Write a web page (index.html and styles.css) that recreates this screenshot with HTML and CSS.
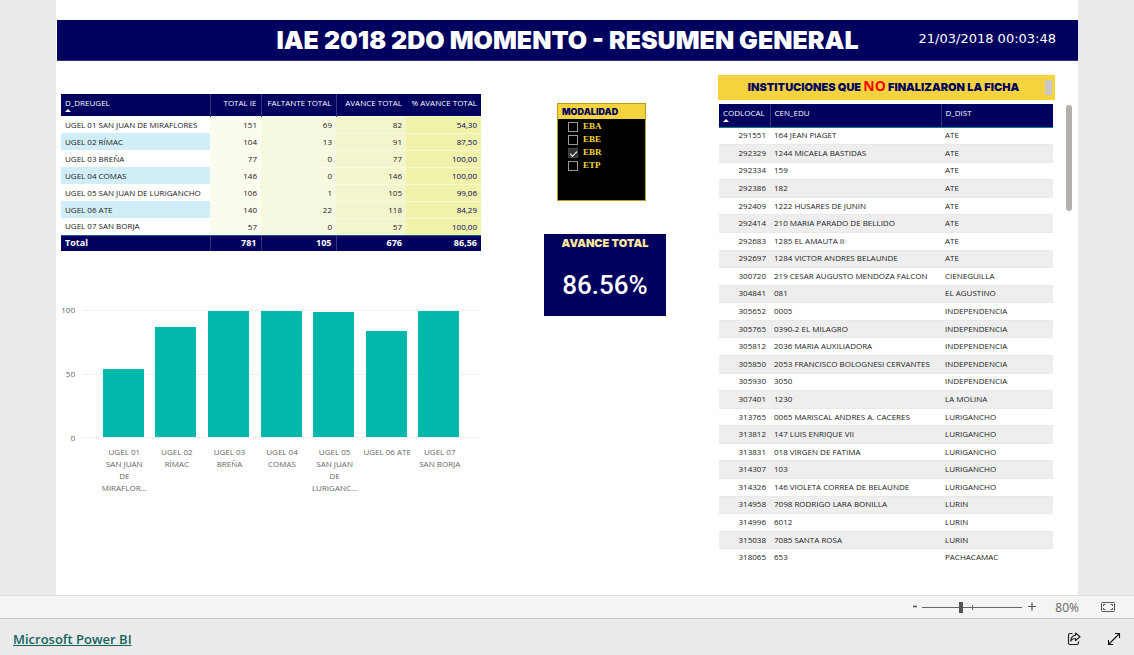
FILE: index.html
```html
<!DOCTYPE html>
<html lang="es">
<head>
<meta charset="utf-8">
<title>IAE 2018 2DO MOMENTO - RESUMEN GENERAL</title>
<link rel="stylesheet" href="styles.css">
</head>
<body>
<main class="stage">
  <div class="report">
    <header class="banner">
      <h1 class="banner-title">IAE 2018 2DO MOMENTO - RESUMEN GENERAL</h1>
      <time class="banner-time">21/03/2018 00:03:48</time>
    </header>
    <div class="columns">
      <section class="summary">
        <table class="summary-table">
          <colgroup><col class="c-name"><col class="c-ie"><col class="c-missing"><col class="c-done"><col class="c-pct"></colgroup>
          <thead>
            <tr><th>D_DREUGEL<span class="sort"></span></th><th>TOTAL IE</th><th>FALTANTE TOTAL</th><th>AVANCE TOTAL</th><th>% AVANCE TOTAL</th></tr>
          </thead>
          <tbody>
            <tr><td>UGEL 01 SAN JUAN DE MIRAFLORES</td><td>151</td><td>69</td><td>82</td><td>54,30</td></tr>
            <tr><td>UGEL 02 RÍMAC</td><td>104</td><td>13</td><td>91</td><td>87,50</td></tr>
            <tr><td>UGEL 03 BREÑA</td><td>77</td><td>0</td><td>77</td><td>100,00</td></tr>
            <tr><td>UGEL 04 COMAS</td><td>146</td><td>0</td><td>146</td><td>100,00</td></tr>
            <tr><td>UGEL 05 SAN JUAN DE LURIGANCHO</td><td>106</td><td>1</td><td>105</td><td>99,06</td></tr>
            <tr><td>UGEL 06 ATE</td><td>140</td><td>22</td><td>118</td><td>84,29</td></tr>
            <tr><td>UGEL 07 SAN BORJA</td><td>57</td><td>0</td><td>57</td><td>100,00</td></tr>
          </tbody>
          <tfoot>
            <tr><td>Total</td><td>781</td><td>105</td><td>676</td><td>86,56</td></tr>
          </tfoot>
        </table>
        <div class="chart">
          <div class="axis"><span>100</span><span>50</span><span>0</span></div>
          <div class="plot">
            <div class="bars">
              <div class="band"><div class="bar" style="height:54.3%"></div></div>
              <div class="band"><div class="bar" style="height:87.5%"></div></div>
              <div class="band"><div class="bar" style="height:100%"></div></div>
              <div class="band"><div class="bar" style="height:100%"></div></div>
              <div class="band"><div class="bar" style="height:99.06%"></div></div>
              <div class="band"><div class="bar" style="height:84.29%"></div></div>
              <div class="band"><div class="bar" style="height:100%"></div></div>
            </div>
            <div class="labels">
              <span>UGEL 01<br>SAN JUAN<br>DE<br>MIRAFLOR...</span>
              <span>UGEL 02<br>RÍMAC</span>
              <span>UGEL 03<br>BREÑA</span>
              <span>UGEL 04<br>COMAS</span>
              <span>UGEL 05<br>SAN JUAN<br>DE<br>LURIGANC...</span>
              <span>UGEL 06 ATE</span>
              <span>UGEL 07<br>SAN BORJA</span>
            </div>
          </div>
        </div>
      </section>
      <section class="middle">
        <fieldset class="slicer">
          <legend class="slicer-title">MODALIDAD</legend>
          <label class="option"><input type="checkbox">EBA</label>
          <label class="option"><input type="checkbox">EBE</label>
          <label class="option"><input type="checkbox" checked>EBR</label>
          <label class="option"><input type="checkbox">ETP</label>
        </fieldset>
        <div class="card">
          <h2 class="card-title">AVANCE TOTAL</h2>
          <p class="card-value">86.56%</p>
        </div>
      </section>
      <section class="pending">
        <h2 class="pending-title"><span>INSTITUCIONES QUE <strong>NO</strong> FINALIZARON LA FICHA</span><i class="grip"></i></h2>
        <div class="list">
          <div class="viewport">
            <table class="list-table">
              <colgroup><col class="c-code"><col class="c-school"><col class="c-dist"></colgroup>
              <thead><tr><th>CODLOCAL<span class="sort"></span></th><th>CEN_EDU</th><th>D_DIST</th></tr></thead>
              <tbody>
                <tr><td>291551</td><td>164 JEAN PIAGET</td><td>ATE</td></tr>
                <tr><td>292329</td><td>1244 MICAELA BASTIDAS</td><td>ATE</td></tr>
                <tr><td>292334</td><td>159</td><td>ATE</td></tr>
                <tr><td>292386</td><td>182</td><td>ATE</td></tr>
                <tr><td>292409</td><td>1222 HUSARES DE JUNIN</td><td>ATE</td></tr>
                <tr><td>292414</td><td>210 MARIA PARADO DE BELLIDO</td><td>ATE</td></tr>
                <tr><td>292683</td><td>1285 EL AMAUTA II</td><td>ATE</td></tr>
                <tr><td>292697</td><td>1284 VICTOR ANDRES BELAUNDE</td><td>ATE</td></tr>
                <tr><td>300720</td><td>219 CESAR AUGUSTO MENDOZA FALCON</td><td>CIENEGUILLA</td></tr>
                <tr><td>304841</td><td>081</td><td>EL AGUSTINO</td></tr>
                <tr><td>305652</td><td>0005</td><td>INDEPENDENCIA</td></tr>
                <tr><td>305765</td><td>0390-2 EL MILAGRO</td><td>INDEPENDENCIA</td></tr>
                <tr><td>305812</td><td>2036 MARIA AUXILIADORA</td><td>INDEPENDENCIA</td></tr>
                <tr><td>305850</td><td>2053 FRANCISCO BOLOGNESI CERVANTES</td><td>INDEPENDENCIA</td></tr>
                <tr><td>305930</td><td>3050</td><td>INDEPENDENCIA</td></tr>
                <tr><td>307401</td><td>1230</td><td>LA MOLINA</td></tr>
                <tr><td>313765</td><td>0065 MARISCAL ANDRES A. CACERES</td><td>LURIGANCHO</td></tr>
                <tr><td>313812</td><td>147 LUIS ENRIQUE VII</td><td>LURIGANCHO</td></tr>
                <tr><td>313831</td><td>018 VIRGEN DE FATIMA</td><td>LURIGANCHO</td></tr>
                <tr><td>314307</td><td>103</td><td>LURIGANCHO</td></tr>
                <tr><td>314326</td><td>146 VIOLETA CORREA DE BELAUNDE</td><td>LURIGANCHO</td></tr>
                <tr><td>314958</td><td>7098 RODRIGO LARA BONILLA</td><td>LURIN</td></tr>
                <tr><td>314996</td><td>6012</td><td>LURIN</td></tr>
                <tr><td>315038</td><td>7085 SANTA ROSA</td><td>LURIN</td></tr>
                <tr><td>318065</td><td>653</td><td>PACHACAMAC</td></tr>
              </tbody>
            </table>
          </div>
          <div class="scrollbar"></div>
        </div>
      </section>
    </div>
  </div>
</main>
<div class="zoombar">
  <button class="step" type="button" aria-label="Alejar"><svg width="10" height="10" viewBox="0 0 10 10"><path d="M3 4.5h4" stroke="#555" stroke-width="1.6"/></svg></button>
  <input class="zoom" type="range" min="0" max="100" value="39" aria-label="Zoom">
  <button class="step" type="button" aria-label="Acercar"><svg width="10" height="10" viewBox="0 0 10 10"><path d="M1 4.5h8M5 .5v8" stroke="#555" stroke-width="1.2"/></svg></button>
  <span class="percent">80%</span>
  <button class="fit" type="button" aria-label="Ajustar a la página"><svg width="14" height="10" viewBox="0 0 14 10" fill="none" stroke="#555"><rect x=".5" y=".5" width="13" height="9" rx="1"/><path d="M2.5 4V2.5H4.5M9.5 2.5h2V4M11.5 6v1.500h-2M4.500 7.500h-2V6"/></svg></button>
</div>
<footer class="footer">
  <a class="brand" href="#">Microsoft Power BI</a>
  <button class="action" type="button" aria-label="Compartir"><svg width="14" height="14" viewBox="0 0 14 14" fill="none" stroke="#222" stroke-width="1.200" stroke-linejoin="round"><path d="M5.500 1.500H3Q1.500 1.500 1.500 3v8Q1.500 12.500 3 12.500h7q1.500 0 1.500-1.500V9.500"/><path d="M8.500 1 13 4.800 8.500 8.600V6.500Q5.500 6.300 3.800 9 4.300 3.800 8.500 3.200Z"/></svg></button>
  <button class="action" type="button" aria-label="Pantalla completa"><svg width="14" height="14" viewBox="0 0 14 14" fill="none" stroke="#111" stroke-width="1.100"><path d="M1.500 12.500l11-11M8 1.500h4.500V6M1.500 8v4.500H6"/></svg></button>
</footer>
</body>
</html>
```
FILE: styles.css
```css
* { box-sizing: border-box; }
body {
  margin: 0;
  min-height: 100vh;
  display: flex;
  flex-direction: column;
  background: #eaeaea;
  font-family: "Open Sans", "Noto Sans", sans-serif;
  font-size: 8px;
  color: #222;
}
h1, h2, p { margin: 0; }
button { border: 0; padding: 0; background: none; display: flex; }
table { border-collapse: collapse; table-layout: fixed; }
th, td { white-space: nowrap; padding: 0 4px; line-height: 12px; }
th { font-weight: 400; color: #fff; background: #00005e; vertical-align: top; text-align: left; padding-top: 3px; }

.stage { flex: 1; display: flex; padding: 0 56px; }
.report { flex: 1; background: #fff; padding: 20px 0 35px 1px; }

.banner {
  display: grid;
  grid-template-columns: 1fr auto 1fr;
  align-items: center;
  height: 41px;
  background: #00005e;
  border-bottom: 1px solid #33337e;
  color: #fff;
}
.banner-title { grid-column: 2; font: 900 25px/40px Inter, sans-serif; white-space: nowrap; }
.banner-time { justify-self: end; padding: 0 22px 3px 0; font: 13px/20px "DejaVu Sans", sans-serif; }

.columns {
  display: grid;
  grid-template-columns: 420fr 237fr 354fr;
  padding: 14px 6px 0 4px;
}

.summary { padding-top: 19px; }
.summary-table, .list-table, .chart { font-size: 8px; }
.summary-table { width: 100%; }
.c-name { width: 149px; }
.c-ie { width: 51px; }
.c-missing { width: 75px; }
.c-done { width: 70px; }
.summary-table thead tr { height: 22px; }
.summary-table th + th { text-align: right; }
.summary-table tbody tr { height: 17px; }
.summary-table tbody tr:nth-child(even) td:first-child { background: #d0edf8; }
.summary-table td + td { text-align: right; border-top: 1px solid #ffffff66; }
.summary-table tbody td:nth-child(2) { background: #fbfbee; }
.summary-table tbody td:nth-child(3) { background: #f6f8df; }
.summary-table tbody td:nth-child(4) { background: #f4f5cd; }
.summary-table tbody td:nth-child(5) { background: #f2f3aa; color: #00005e; }
.summary-table th:nth-child(2), .summary-table th:nth-child(3), .summary-table th:nth-child(4),
.summary-table tfoot td:nth-child(2), .summary-table tfoot td:nth-child(3), .summary-table tfoot td:nth-child(4) { border-left: 1px solid #33337e; }
.summary-table tfoot tr { height: 16px; }
.summary-table tfoot td { background: #00005e; color: #fff; font-size: 9px; font-weight: 700; border-top: 1px solid #1b5b8c; }
.sort {
  display: block;
  width: 0;
  border: 3px solid transparent;
  border-top: 0;
  border-bottom-color: #fff;
}

.chart { display: flex; padding-top: 59px; color: #666; }
.axis { width: 21px; height: 128px; display: flex; flex-direction: column; justify-content: space-between; }
.axis span { height: 0; line-height: 0; width: 14px; text-align: right; display: block; align-self: flex-start; }
.plot { flex: 1; }
.bars {
  display: flex;
  height: 128px;
  padding: 0 16px 0 15px;
  border-top: 1px solid #eee;
  border-bottom: 1px solid #eee;
  background: linear-gradient(#eee, #eee) center / 100% 1px no-repeat;
}
.band { flex: 1; display: flex; align-items: flex-end; justify-content: center; }
.bar { width: 78%; background: #01b8aa; }
.labels { display: flex; padding: 8px 15px 0 16px; line-height: 12px; text-align: center; }
.labels span { flex: 1 1 0; min-width: 0; white-space: nowrap; }

.middle { display: flex; flex-direction: column; align-items: flex-start; gap: 33px; padding: 28px 0 0 63px; }
.slicer {
  width: 89px;
  min-height: 98px;
  margin: 0 0 0 13px;
  padding: 0;
  border: 1px solid #b89b1e;
  background: #000;
}
.slicer-title {
  float: left;
  width: 100%;
  margin-bottom: 1px;
  padding: 0 4px;
  background: #f5d33f;
  color: #00005e;
  font: 900 9px/15px Inter, sans-serif;
}
.option {
  clear: both;
  display: flex;
  align-items: center;
  gap: 5px;
  padding-left: 10px;
  color: #f5d33f;
  font: 700 9px/13px "Liberation Serif", serif;
}
.option input {
  appearance: none;
  width: 10px;
  height: 10px;
  margin: 0;
  border: 1px solid #999;
}
.option input:checked {
  display: grid;
  place-items: center;
  background: #333;
  border-color: #444;
}
.option input:checked::before {
  content: "";
  width: 6px;
  height: 3px;
  border: solid #fff;
  border-width: 0 0 1px 1px;
  transform: rotate(-45deg);
}
.card { width: 122px; height: 82px; background: #00005e; text-align: center; }
.card-title { color: #fde79b; font: 900 11px/18px Inter, sans-serif; }
.card-value { padding-top: 16px; color: #fff; font: 500 26px/34px Roboto, sans-serif; }

.pending-title {
  display: flex;
  align-items: center;
  width: 337px;
  max-width: 100%;
  height: 25px;
  background: #f5d33f;
  color: #00005e;
  font: 900 11px/25px Inter, sans-serif;
}
.pending-title span { flex: 1; text-align: center; padding-left: 4px; white-space: nowrap; }
.pending-title strong { color: #f00; font: 700 14px/20px "Open Sans", sans-serif; }
.grip { width: 7px; height: 15px; margin-right: 3px; background: #c8c8c8; }
.list { display: flex; justify-content: space-between; padding: 4px 0 0 1px; }
.viewport { flex: 1; height: 456px; overflow: hidden; }
.list-table { width: 100%; height: 463px; }
.c-code { width: 51px; }
.c-school { width: 171px; }
.list-table thead tr { height: 23px; }
.list-table th { border-bottom: 1px solid #017f8f; }
.list-table th + th { border-left: 1px solid #33337e; }
.list-table td:first-child { text-align: right; }
.list-table tbody tr:nth-child(even) { background: #eee; }
.list-table tbody td { padding-bottom: 1px; border-bottom: 1px solid #e9e9e9; }
.scrollbar { width: 6px; height: 106px; margin: 1px 0 0 13px; border-radius: 3px; background: #b3b0ad; }

.zoombar {
  display: flex;
  align-items: center;
  justify-content: flex-end;
  height: 23px;
  padding-right: 19px;
  border-top: 1px solid #ddd;
  background: #f4f4f4;
}
.step { width: 10px; }
.zoom {
  appearance: none;
  width: 100px;
  height: 11px;
  margin: 0 5px 0 2px;
  background:
    linear-gradient(#666, #666) 0 5px / 100% 1px no-repeat,
    linear-gradient(#666, #666) 50px 3px / 1px 5px no-repeat;
}
.zoom::-webkit-slider-thumb { appearance: none; width: 4px; height: 11px; background: #555; }
.percent { width: 42px; text-align: right; font-size: 12px; color: #666; margin-right: 22px; }
.footer {
  display: flex;
  align-items: center;
  gap: 26px;
  height: 37px;
  padding: 3px 13px 0;
  border-top: 1px solid #c8c8c8;
}
.brand { margin-right: auto; color: #17635e; font-size: 13px; font-weight: 600; line-height: 20px; }
```
